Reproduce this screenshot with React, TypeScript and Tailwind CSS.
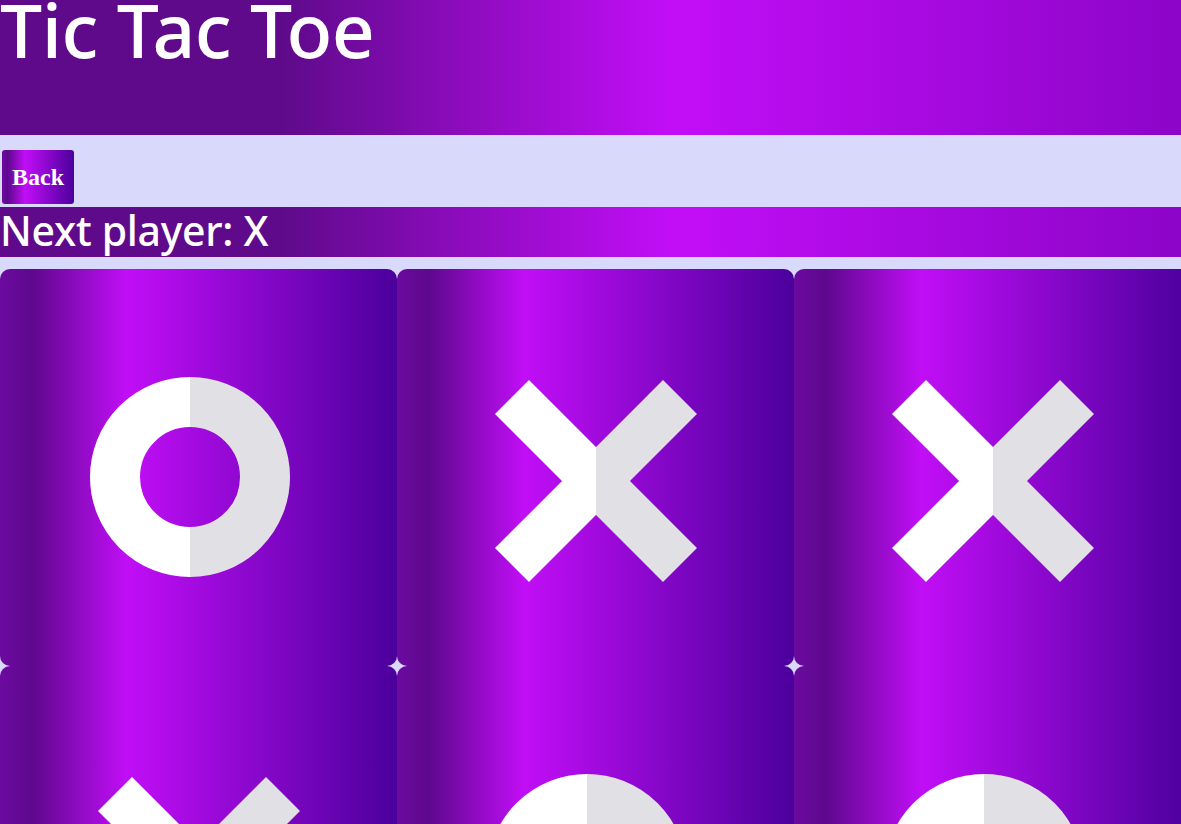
type Mark = 'X' | 'O'

const board: Mark[] = ['O', 'X', 'X', 'X', 'O', 'O', 'O', 'X', 'X']

function XMark({ id }: { id: string }) {
  return (
    <svg width="202" height="202" viewBox="0 0 202 202" className="shrink-0">
      <defs>
        <linearGradient id={id} gradientUnits="userSpaceOnUse" x1="0" y1="0" x2="202" y2="0">
          <stop offset="0.5" stopColor="#ffffff" />
          <stop offset="0.5" stopColor="#e1e1e5" />
        </linearGradient>
      </defs>
      <g stroke={`url(#${id})`} strokeWidth="48" strokeLinecap="butt">
        <line x1="17" y1="17" x2="185" y2="185" />
        <line x1="185" y1="17" x2="17" y2="185" />
      </g>
    </svg>
  )
}

function OMark({ id }: { id: string }) {
  return (
    <svg width="200" height="200" viewBox="0 0 200 200" className="shrink-0 mr-[17px] mb-[8px]">
      <defs>
        <linearGradient id={id} gradientUnits="userSpaceOnUse" x1="0" y1="0" x2="200" y2="0">
          <stop offset="0.5" stopColor="#ffffff" />
          <stop offset="0.5" stopColor="#e1e1e5" />
        </linearGradient>
      </defs>
      <circle cx="100" cy="100" r="75" fill="none" stroke={`url(#${id})`} strokeWidth="50" />
    </svg>
  )
}

export default function App() {
  return (
    <div className="min-h-screen bg-[#d9d9fc] overflow-hidden font-['Noto_Sans',sans-serif]">
      {/* header */}
      <header className="flex flex-col h-[135px] bg-[linear-gradient(90deg,#5f0a8b_0%,#5f0a8b_24%,#c20ef7_57%,#8c05c8_100%)]">
        <h1 className="text-[75px] font-medium leading-none text-white -mt-[8px] tracking-[-0.5px]">Tic Tac Toe</h1>
      </header>

      <div className="pt-[15px] pb-[3px] pl-[2px]">
        <button className="w-[72px] h-[54px] rounded-[3px] text-white text-[24px] font-bold font-['Liberation_Serif',serif] bg-[linear-gradient(90deg,#6c0aa0_0%,#5e088e_8%,#c10ef6_32%,#4b009c_100%)]">
          Back
        </button>
      </div>

      <div className="flex flex-col h-[50px] bg-[linear-gradient(90deg,#5f0a8b_0%,#5f0a8b_24%,#c20ef7_57%,#8c05c8_100%)]">
        <h2 className="text-[41px] font-medium leading-[50px] text-white -mt-[2px] tracking-[-0.3px]">Next player: X</h2>
      </div>

      {/* board */}
      <div className="mt-[12px] grid grid-cols-[repeat(3,397px)]">
        {board.map((m, i) => (
          <div
            key={i}
            className="h-[397px] rounded-[10px] flex items-center justify-center pt-[26px] bg-[linear-gradient(90deg,#6c0aa0_0%,#5e088e_8%,#c10ef6_32%,#4b009c_100%)]"
          >
            {m === 'X' ? <XMark id={`gx${i}`} /> : <OMark id={`go${i}`} />}
          </div>
        ))}
      </div>
    </div>
  )
}
